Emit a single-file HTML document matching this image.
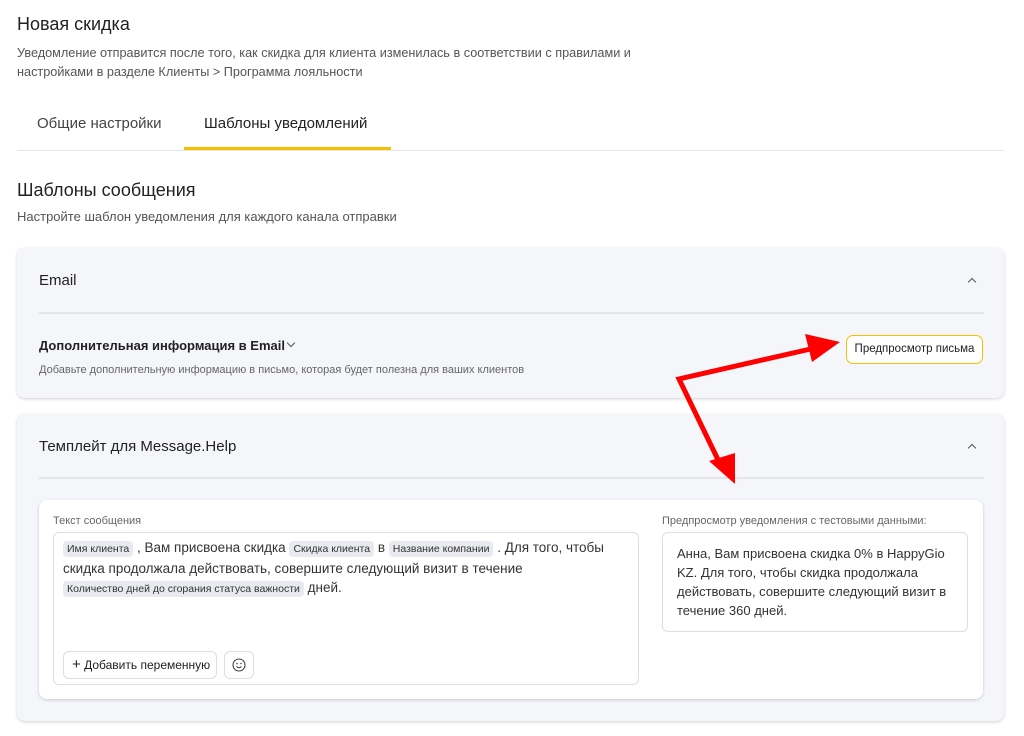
<!DOCTYPE html>
<html><head><meta charset="utf-8"><style>
*{box-sizing:border-box;margin:0;padding:0}
body{width:1024px;height:736px;background:#fff;font-family:"Liberation Sans","Noto Sans CJK SC",sans-serif;color:#222;position:relative;overflow:hidden}
.a{position:absolute;white-space:nowrap}
.card{position:absolute;background:#f5f6fa;border-radius:8px;box-shadow:0 1px 3px rgba(0,0,0,.18)}
.hr{position:absolute;height:2px;background:#e3e5ea}
.chip{background:#e8eaef;border-radius:4px;font-size:10.5px;padding:2px 4px;color:#333}
.chev{position:absolute;width:6px;height:6px;border-left:1.3px solid #555;border-top:1.3px solid #555;transform:rotate(45deg)}
</style></head><body>
<div class="a" style="left:17px;top:14px;font-size:18px">Новая скидка</div>
<div class="a" style="left:17px;top:44px;font-size:12.7px;color:#555;line-height:19px">Уведомление отправится после того, как скидка для клиента изменилась в соответствии с правилами и<br>настройками в разделе Клиенты &gt; Программа лояльности</div>
<div class="a" style="left:37px;top:115px;font-size:15px;color:#444">Общие настройки</div>
<div class="a" style="left:204px;top:115px;font-size:15px;color:#222">Шаблоны уведомлений</div>
<div class="a" style="left:17px;top:150px;width:987px;height:1px;background:#e6e7ea"></div>
<div class="a" style="left:184px;top:147px;width:207px;height:3px;background:#f5c000"></div>
<div class="a" style="left:17px;top:180px;font-size:18px">Шаблоны сообщения</div>
<div class="a" style="left:17px;top:209px;font-size:13px;color:#555">Настройте шаблон уведомления для каждого канала отправки</div>

<div class="card" style="left:17px;top:248px;width:987px;height:150px"></div>
<div class="a" style="left:39px;top:272px;font-size:15px">Email</div>
<div class="chev" style="left:969px;top:279px"></div>
<div class="hr" style="left:39px;top:312px;width:945px"></div>
<div class="a" style="left:39px;top:338px;font-size:13px;font-weight:bold">Дополнительная информация в Email</div>
<div class="chev" style="left:288px;top:340px;transform:rotate(225deg)"></div>
<div class="a" style="left:39px;top:364px;font-size:11px;color:#666">Добавьте дополнительную информацию в письмо, которая будет полезна для ваших клиентов</div>
<div class="a" style="left:846px;top:335px;width:137px;height:29px;border:1px solid #f5c000;border-radius:7px;background:#fff;font-size:11.5px;text-align:center;line-height:27px">Предпросмотр письма</div>

<div class="card" style="left:17px;top:414px;width:987px;height:307px"></div>
<div class="a" style="left:39px;top:438px;font-size:15px">Темплейт для Message.Help</div>
<div class="chev" style="left:969px;top:445px"></div>
<div class="hr" style="left:39px;top:477px;width:945px"></div>
<div class="a" style="left:39px;top:500px;width:944px;height:199px;background:#fff;border-radius:8px;box-shadow:0 1px 3px rgba(0,0,0,.18)"></div>
<div class="a" style="left:53px;top:515px;font-size:11px;color:#666">Текст сообщения</div>
<div class="a" style="left:53px;top:532px;width:586px;height:153px;border:1px solid #dcdee3;border-radius:6px"></div>
<div class="a" style="left:63px;top:538px;font-size:13.5px;line-height:19px;color:#333">
<span class="chip">Имя клиента</span> , Вам присвоена скидка <span class="chip">Скидка клиента</span> в <span class="chip">Название компании</span> . Для того, чтобы<br>скидка продолжала действовать, совершите следующий визит в течение<br><span class="chip">Количество дней до сгорания статуса важности</span> дней.</div>
<div class="a" style="left:63px;top:651px;width:154px;height:28px;border:1px solid #dcdee3;border-radius:6px;font-size:12px;line-height:26px;padding-left:8px"><span style="font-size:15px">+</span> Добавить переменную</div>
<div class="a" style="left:224px;top:651px;width:30px;height:28px;border:1px solid #dcdee3;border-radius:6px"><svg width="28" height="26" viewBox="0 0 28 26"><circle cx="14" cy="13" r="6" fill="none" stroke="#444" stroke-width="1.1"/><circle cx="12" cy="11.5" r=".8" fill="#444"/><circle cx="16" cy="11.5" r=".8" fill="#444"/><path d="M11.5 14.5q2.5 2.5 5 0" fill="none" stroke="#444" stroke-width="1"/></svg></div>
<div class="a" style="left:662px;top:515px;font-size:11px;color:#666">Предпросмотр уведомления с тестовыми данными:</div>
<div class="a" style="left:662px;top:532px;width:306px;height:100px;border:1px solid #dcdee3;border-radius:6px;padding:11px 14px;font-size:13px;line-height:19px;color:#333;white-space:normal">Анна, Вам присвоена скидка 0% в HappyGio KZ. Для того, чтобы скидка продолжала действовать, совершите следующий визит в течение 360 дней.</div>

<svg class="a" style="left:0;top:0" width="1024" height="736">
<polyline points="815,348 679,379 722,468" fill="none" stroke="#f00" stroke-width="5" stroke-linejoin="miter"/>
<polygon points="840,342 805,334 812,362" fill="#f00"/>
<polygon points="735,484 709,461 735,453" fill="#f00"/>
</svg>
</body></html>
